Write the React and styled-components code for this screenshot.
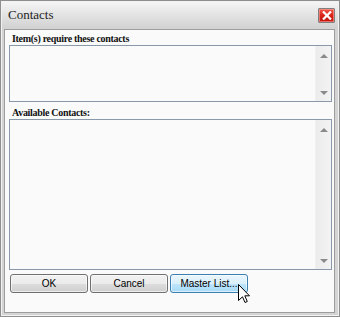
import styled, { createGlobalStyle } from "styled-components";

const GlobalStyle = createGlobalStyle`
  html, body {
    margin: 0;
    padding: 0;
    background: #ffffff;
  }
  * {
    box-sizing: border-box;
  }
`;

// 창 틀
const Window = styled.div`
  position: relative;
  width: 340px;
  height: 317px;
  border: 1px solid #8f8f8f;
  box-shadow: inset 0 0 0 1px #f2f2f2;
  background: linear-gradient(#f6f6f6 0px, #d3d3d3 26px, #d4d4d4 100%);
  display: flex;
  flex-direction: column;
`;

const TitleBar = styled.div`
  height: 28px;
  display: flex;
  align-items: center;
  justify-content: space-between;
  padding: 0 4px 0 7px;
`;

const Title = styled.span`
  font-family: "Liberation Serif", "Times New Roman", serif;
  font-size: 13px;
  color: #1e1e1e;
`;

const CloseButton = styled.button`
  width: 17px;
  height: 15px;
  padding: 0;
  border: 1px solid #808080;
  border-radius: 1px;
  background: linear-gradient(#f05a4a, #d8231a 50%, #c0150e);
  box-shadow: inset 0 0 0 1px rgba(255, 170, 160, 0.6);
  display: flex;
  align-items: center;
  justify-content: center;
  cursor: pointer;
`;

const Body = styled.div`
  flex: 1;
  margin: 0 4px 3px 3px;
  border: 1px solid #9d9d9d;
  background: #fafafa;
  padding: 0 2px 0 4px;
  display: flex;
  flex-direction: column;
`;

const Label = styled.div`
  font-family: "Liberation Serif", "Times New Roman", serif;
  font-weight: bold;
  font-size: 10px;
  letter-spacing: -0.3px;
  line-height: 12px;
  color: #111;
  padding-left: 3px;
  margin-top: ${(props) => props.top}px;
`;

const ListBox = styled.div`
  height: ${(props) => props.height}px;
  border: 1px solid #8a99aa;
  background: #fafafa;
  display: flex;
  justify-content: flex-end;
`;

const ScrollBar = styled.div`
  width: 16px;
  background: linear-gradient(90deg, #ececec, #f3f3f3);
  border-left: 1px solid #f0f0f0;
  display: flex;
  flex-direction: column;
  justify-content: space-between;
  align-items: center;
  padding: 8px 0 6px;
`;

const Arrow = styled.div`
  width: 0;
  height: 0;
  border-left: 4px solid transparent;
  border-right: 4px solid transparent;
  ${(props) =>
    props.down
      ? "border-top: 4px solid #8a8a8a;"
      : "border-bottom: 4px solid #8a8a8a;"}
`;

const ButtonRow = styled.div`
  display: flex;
  gap: 2px;
  margin: 4px 0 0 1px;
`;

const Button = styled.button`
  width: 78px;
  height: 19px;
  padding: 0;
  border: 1px solid ${(props) => (props.hover ? "#3c7fb1" : "#707070")};
  border-radius: 3px;
  background: ${(props) =>
    props.hover
      ? "linear-gradient(#eaf6fd 0%, #d9f0fc 50%, #bee6fd 51%, #a7d9f5 100%)"
      : "linear-gradient(#f2f2f2 0%, #ebebeb 50%, #dddddd 51%, #cfcfcf 100%)"};
  box-shadow: inset 0 0 0 1px rgba(255, 255, 255, 0.6);
  font-family: "Liberation Sans", Arial, sans-serif;
  font-size: 10px;
  color: #000;
  cursor: pointer;
`;

const Pointer = styled.svg`
  position: absolute;
  left: 237px;
  top: 283px;
  pointer-events: none;
`;

function ScrollList({ height }) {
  return (
    <ListBox height={height}>
      <ScrollBar>
        <Arrow />
        <Arrow down />
      </ScrollBar>
    </ListBox>
  );
}

export default function App() {
  return (
    <>
      <GlobalStyle />
      <Window>
        <TitleBar>
          <Title>Contacts</Title>
          <CloseButton aria-label="Close">
            <svg width="10" height="9" viewBox="0 0 10 9">
              <path d="M1 0.5 L9 8.5 M9 0.5 L1 8.5" stroke="#fff" strokeWidth="2.2" />
            </svg>
          </CloseButton>
        </TitleBar>
        <Body>
          <Label top={3}>Item(s) require these contacts</Label>
          <ScrollList height={57} />
          <Label top={5}>Available Contacts:</Label>
          <ScrollList height={151} />
          <ButtonRow>
            <Button>OK</Button>
            <Button>Cancel</Button>
            <Button hover>Master List...</Button>
          </ButtonRow>
        </Body>
        <Pointer width="13" height="20" viewBox="0 0 13 20">
          <path
            d="M0.5 0.5 L0.5 16.5 L4.5 12.8 L7 18.5 L9.3 17.5 L6.8 11.8 L11.5 11.8 Z"
            fill="#fff"
            stroke="#000"
            strokeWidth="1"
            strokeLinejoin="miter"
          />
        </Pointer>
      </Window>
    </>
  );
}
